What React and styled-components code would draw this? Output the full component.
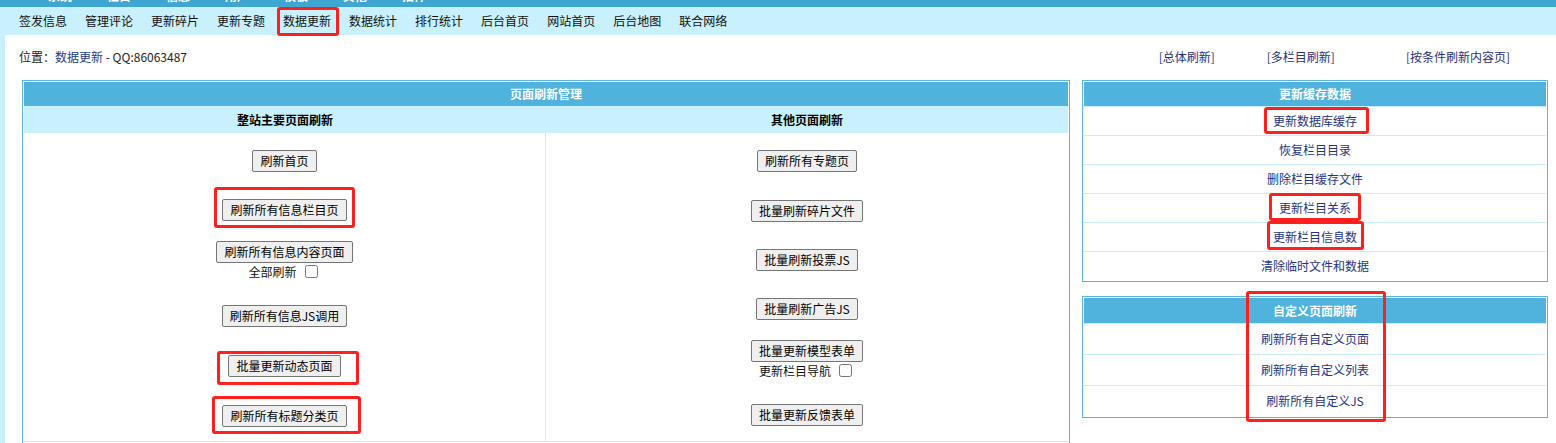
import React from "react";
import styled, { createGlobalStyle } from "styled-components";

const FONT = `"Noto Sans CJK SC", "Liberation Sans", sans-serif`;

const GlobalStyle = createGlobalStyle`
  html, body {
    margin: 0;
    padding: 0;
    background: #fff;
  }
  body {
    font-family: ${FONT};
    font-size: 12px;
    color: #000;
    overflow: hidden;
  }
`;

const Page = styled.div`
  width: 1556px;
  height: 443px;
  overflow: hidden;
  display: flex;
  flex-direction: column;
`;

/* 最上面被截掉的深蓝菜单条 */
const TopBar = styled.div`
  height: 7px;
  flex: none;
  background: #3fa6d2;
  overflow: hidden;
`;

const TopMenu = styled.div`
  display: flex;
  gap: 35px;
  margin-top: -12px;
  padding-left: 48px;
  line-height: 16px;
  color: #fff;
  font-weight: bold;
`;

const NavBar = styled.nav`
  height: 28px;
  flex: none;
  display: flex;
  align-items: stretch;
  gap: 18px;
  padding-left: 19px;
  background: #c8f0fd;
`;

const NavItem = styled.span`
  line-height: 28px;
  color: #111;
  white-space: nowrap;
`;

/* 红色标注框，盖在内容上面 */
const Marked = styled.span`
  position: relative;
  display: inline-flex;

  &::after {
    content: "";
    position: absolute;
    top: ${(p) => -p.$t}px;
    right: ${(p) => -p.$r}px;
    bottom: ${(p) => -p.$b}px;
    left: ${(p) => -p.$l}px;
    border: 3px solid #ff1f1f;
    border-radius: 3px;
    pointer-events: none;
  }
`;

const Main = styled.div`
  flex: 1;
  border-left: 5px solid #c8f0fd;
  background: #fff;
`;

const LocationBar = styled.div`
  height: 43px;
  display: flex;
  align-items: center;
  justify-content: space-between;
  padding: 0 46px 0 14px;
`;

const Crumb = styled.span`
  color: #222;
`;

const CrumbLink = styled.span`
  color: #1f3c88;
`;

const QuickLinks = styled.div`
  display: flex;
`;

const QuickLink = styled.span`
  margin-left: ${(p) => p.$gap}px;
  color: #29307a;
  white-space: nowrap;
`;

const Content = styled.div`
  display: flex;
  align-items: flex-start;
  gap: 12px;
  margin-top: 2px;
  padding-left: 17px;
`;

const Panel = styled.div`
  position: relative;
  box-sizing: border-box;
  width: ${(p) => p.$w}px;
  flex: none;
  border: 1px solid #5ab6df;
  padding: 1px;
  background: #fff;
`;

const PanelHead = styled.div`
  height: ${(p) => p.$h}px;
  line-height: ${(p) => p.$h}px;
  background: #4fb3de;
  color: #fff;
  font-weight: bold;
  text-align: center;
`;

const SubHead = styled.div`
  display: grid;
  grid-template-columns: 1fr 1fr;
  height: 27px;
  line-height: 27px;
  background: #c8f0fd;
  font-weight: bold;
  text-align: center;
`;

const Body = styled.div`
  display: grid;
  grid-template-columns: 1fr 1fr;
  border-bottom: 1px solid #c8edfa;
  margin-bottom: 6px;
`;

const Column = styled.div`
  display: flex;
  flex-direction: column;
  border-right: ${(p) => (p.$divider ? "1px solid #c8edfa" : "none")};
`;

const Cell = styled.div`
  height: ${(p) => p.$h}px;
  display: flex;
  flex-direction: column;
  align-items: center;
  justify-content: center;
`;

const Btn = styled.button`
  box-sizing: border-box;
  height: 22px;
  padding: 0 7px;
  font-family: ${FONT};
  font-size: 12px;
  line-height: 16px;
  color: #000;
  background: #efefef;
  border: 1px solid #767676;
  border-radius: 2px;
  white-space: nowrap;
`;

const CheckLine = styled.label`
  display: flex;
  align-items: center;
  height: 18px;
  line-height: 18px;
  color: #111;
`;

const Check = styled.input.attrs({ type: "checkbox" })`
  width: 13px;
  height: 13px;
  margin: 0 3px 0 8px;
`;

const Side = styled.div`
  display: flex;
  flex-direction: column;
  gap: 14px;
`;

const SideRow = styled.div`
  height: ${(p) => p.$h}px;
  border-top: 1px solid #c8edfa;
  display: flex;
  align-items: center;
  justify-content: center;
  color: #1f3481;
`;

const SideText = styled.span`
  line-height: 18px;
`;

const Callout = styled.div`
  position: absolute;
  left: ${(p) => p.$x}px;
  top: ${(p) => p.$y}px;
  width: ${(p) => p.$w}px;
  height: ${(p) => p.$h}px;
  box-sizing: border-box;
  border: 3px solid #ff1f1f;
  border-radius: 3px;
  pointer-events: none;
`;

const topMenu = ["系统", "栏目", "信息", "用户", "模板", "其他", "插件"];
const nav = ["签发信息", "管理评论", "更新碎片", "更新专题", "数据更新", "数据统计", "排行统计", "后台首页", "网站首页", "后台地图", "联合网络"];

const leftRows = [
  { h: 56, btn: "刷新首页" },
  { h: 42, btn: "刷新所有信息栏目页", mark: [12, 8, 7, 8] },
  { h: 59, btn: "刷新所有信息内容页面", check: "全部刷新" },
  { h: 52, btn: "刷新所有信息JS调用" },
  { h: 48, btn: "批量更新动态页面", mark: [4, 18, 8, 11] },
  { h: 51, btn: "刷新所有标题分类页", mark: [9, 14, 7, 10] },
];

const rightRows = [
  { h: 56, btn: "刷新所有专题页" },
  { h: 43, btn: "批量刷新碎片文件" },
  { h: 55, btn: "批量刷新投票JS" },
  { h: 43, btn: "批量刷新广告JS" },
  { h: 59, btn: "批量更新模型表单", check: "更新栏目导航" },
  { h: 52, btn: "批量更新反馈表单" },
];

const cacheRows = [
  { text: "更新数据库缓存", mark: [5, 12, 4, 9] },
  { text: "恢复栏目目录" },
  { text: "删除栏目缓存文件" },
  { text: "更新栏目关系", mark: [6, 10, 4, 10] },
  { text: "更新栏目信息数", mark: [7, 7, 4, 6] },
  { text: "清除临时文件和数据" },
];

const customRows = ["刷新所有自定义页面", "刷新所有自定义列表", "刷新所有自定义JS"];

function withMark(node, mark) {
  if (!mark) return node;
  const [t, r, b, l] = mark;
  return (
    <Marked $t={t} $r={r} $b={b} $l={l}>
      {node}
    </Marked>
  );
}

function ButtonCell({ row }) {
  return (
    <Cell $h={row.h}>
      {withMark(<Btn>{row.btn}</Btn>, row.mark)}
      {row.check && (
        <CheckLine>
          {row.check}
          <Check />
        </CheckLine>
      )}
    </Cell>
  );
}

export default function App() {
  return (
    <Page>
      <GlobalStyle />
      <TopBar>
        <TopMenu>
          {topMenu.map((t) => (
            <span key={t}>{t}</span>
          ))}
        </TopMenu>
      </TopBar>

      <NavBar>
        {nav.map((n) =>
          n === "数据更新" ? (
            <Marked key={n} $t={0} $r={8} $b={1} $l={6}>
              <NavItem>{n}</NavItem>
            </Marked>
          ) : (
            <NavItem key={n}>{n}</NavItem>
          )
        )}
      </NavBar>

      <Main>
        <LocationBar>
          <Crumb>
            位置：<CrumbLink>数据更新</CrumbLink> - QQ:86063487
          </Crumb>
          <QuickLinks>
            <QuickLink $gap={0}>[总体刷新]</QuickLink>
            <QuickLink $gap={52}>[多栏目刷新]</QuickLink>
            <QuickLink $gap={71}>[按条件刷新内容页]</QuickLink>
          </QuickLinks>
        </LocationBar>

        <Content>
          <Panel $w={1048}>
            <PanelHead $h={24}>页面刷新管理</PanelHead>
            <SubHead>
              <span>整站主要页面刷新</span>
              <span>其他页面刷新</span>
            </SubHead>
            <Body>
              <Column $divider>
                {leftRows.map((r) => (
                  <ButtonCell key={r.btn} row={r} />
                ))}
              </Column>
              <Column>
                {rightRows.map((r) => (
                  <ButtonCell key={r.btn} row={r} />
                ))}
              </Column>
            </Body>
          </Panel>

          <Side>
            <Panel $w={466}>
              <PanelHead $h={24}>更新缓存数据</PanelHead>
              {cacheRows.map((r) => (
                <SideRow key={r.text} $h={28}>
                  {withMark(<SideText>{r.text}</SideText>, r.mark)}
                </SideRow>
              ))}
            </Panel>

            <Panel $w={466}>
              <PanelHead $h={25}>自定义页面刷新</PanelHead>
              {customRows.map((t) => (
                <SideRow key={t} $h={30}>
                  <SideText>{t}</SideText>
                </SideRow>
              ))}
              <Callout $x={163} $y={-6} $w={140} $h={131} />
            </Panel>
          </Side>
        </Content>
      </Main>
    </Page>
  );
}
